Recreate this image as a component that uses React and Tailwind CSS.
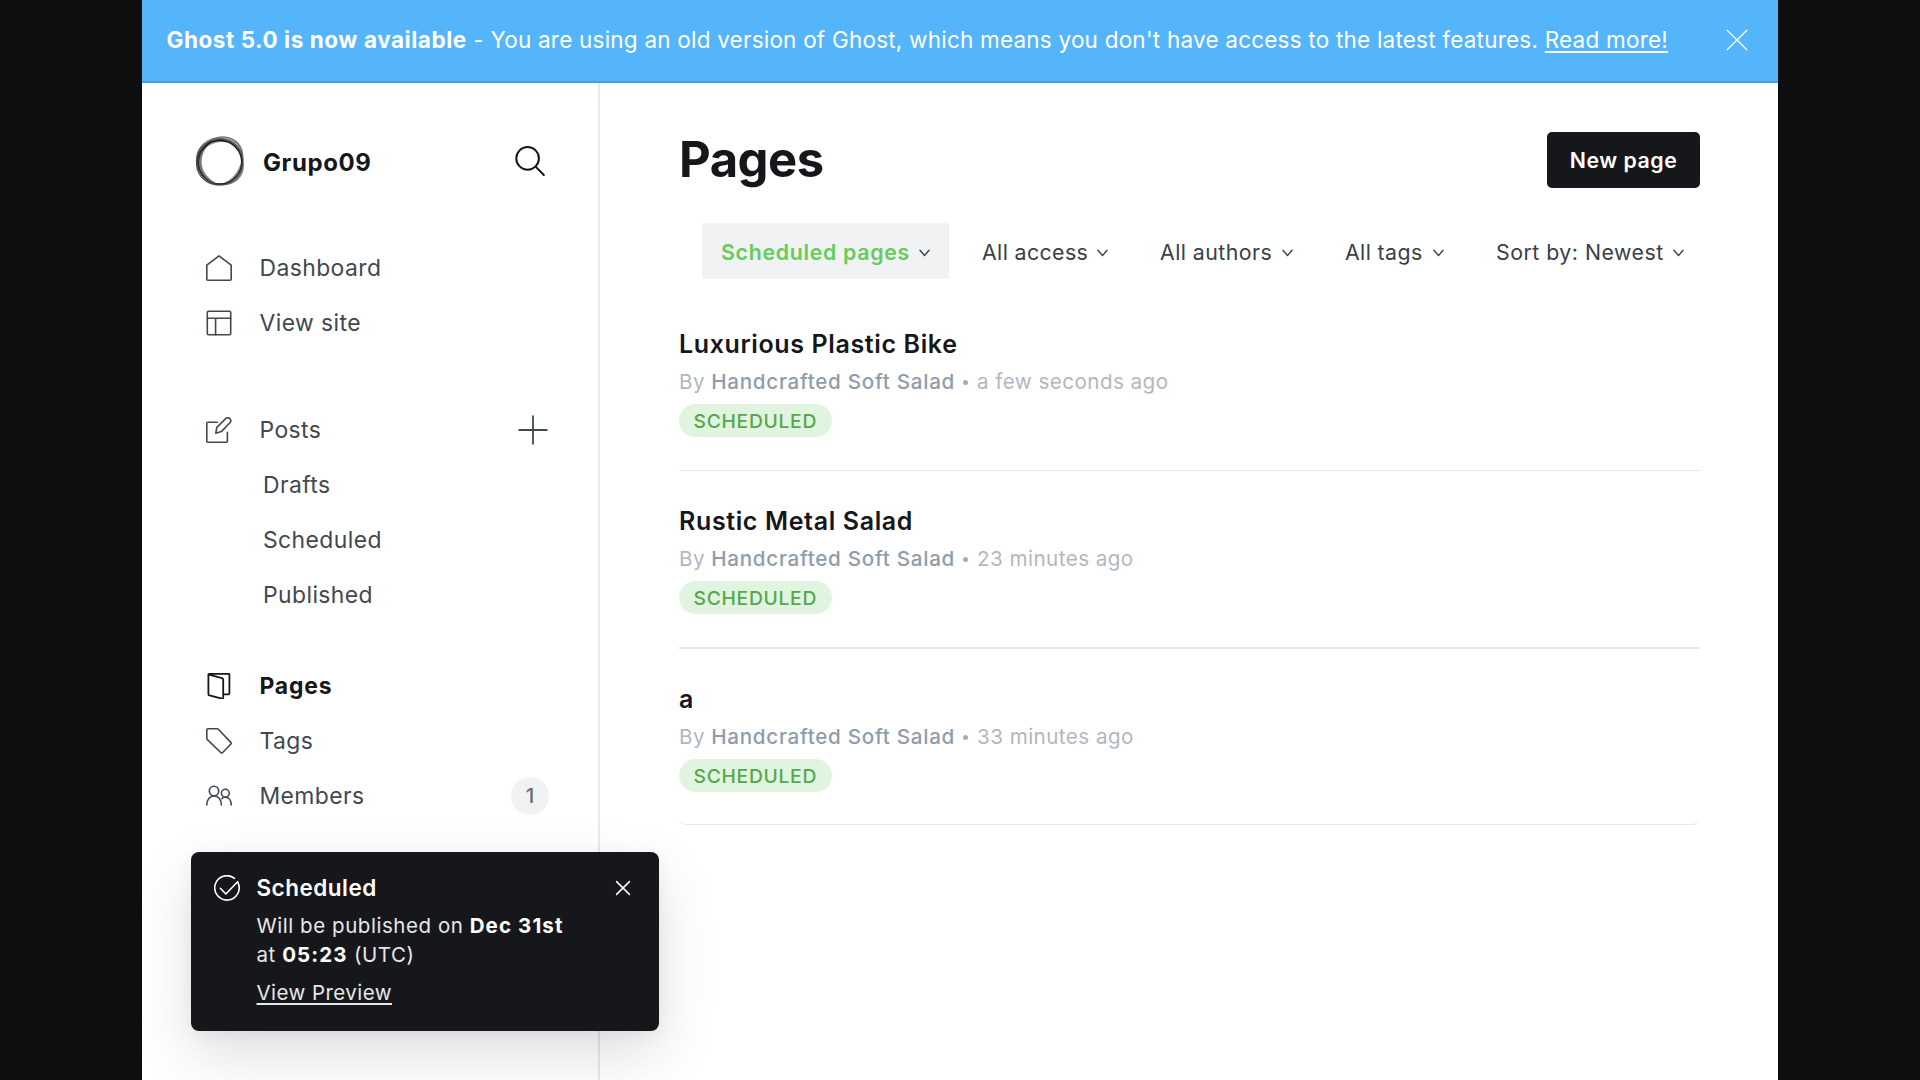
import React from 'react';

function Icon({ className = 'size-[26px]', width = 1.6, children }) {
  return (
    <svg
      viewBox="0 0 26 26"
      fill="none"
      stroke="currentColor"
      strokeWidth={width}
      strokeLinecap="round"
      strokeLinejoin="round"
      className={'shrink-0 ' + className}
    >
      {children}
    </svg>
  );
}

const HomeIcon = () => (
  <Icon>
    <path d="M13 .9 25.2 10.2V24.2a1 1 0 0 1-1 1H1.8a1 1 0 0 1-1-1V10.2Z" />
  </Icon>
);

const LayoutIcon = () => (
  <Icon>
    <rect x="1.3" y="1.3" width="23.4" height="23.4" rx="1.2" />
    <path d="M1.3 8.3h23.4M9.6 8.3v16.4" />
  </Icon>
);

const PostIcon = () => (
  <Icon>
    <path d="M21.4 15.2v9a1 1 0 0 1-1 1H1.8a1 1 0 0 1-1-1V6.2a1 1 0 0 1 1-1h9.6" />
    <path d="m15.4 14.6-5.6 1.6 1-5.8 8.9-8.8a2.8 2.8 0 0 1 4.2 0 2.8 2.8 0 0 1 0 4.2Z" />
  </Icon>
);

const PageIcon = () => (
  <Icon width={1.8}>
    <path d="M3 1.6 16 5.2a1.6 1.6 0 0 1 1.2 1.5v18.1a.9.9 0 0 1-1.2.9L3.4 22.3a1.2 1.2 0 0 1-1-1.2V1.8a1 1 0 0 1 1-1h19a1 1 0 0 1 1 1v18.4a1.2 1.2 0 0 1-1.2 1.2h-4.8" />
  </Icon>
);

const TagIcon = () => (
  <Icon>
    <path d="M1.8.8h9.3a2 2 0 0 1 1.3.5L25 14.6a1 1 0 0 1 0 1.4l-8.6 8.8a1 1 0 0 1-1.4 0L1.4 11.6a2 2 0 0 1-.6-1.4V1.8a1 1 0 0 1 1-1Z" />
  </Icon>
);

const MembersIcon = () => (
  <Icon>
    <circle cx="8" cy="8" r="4.7" />
    <path d="M.8 22c0-5.2 2.8-9 7.2-9s7.4 3.8 7.4 9" />
    <circle cx="19.3" cy="10.2" r="3.9" />
    <path d="M15.9 15.6c1-.9 2.2-1.3 3.6-1.3 3.5 0 5.7 3.2 5.7 7.7" />
  </Icon>
);

const Chevron = () => (
  <svg viewBox="0 0 11 8" fill="none" stroke="currentColor" strokeWidth="1.4" strokeLinecap="round" strokeLinejoin="round" className="ml-auto mt-[3px] h-[8px] w-[11px] shrink-0 text-[#394047]">
    <path d="M1 1.2 5.5 6.6 10 1.2" />
  </svg>
);

const Logo = () => (
  <svg viewBox="0 0 50 50" fill="none" className="size-[50px] shrink-0">
    <g fill="#222" fillRule="evenodd">
      <path opacity=".62" d="M.8 25C.5 12 9 4.500 21 3 13 7 7 15 6.500 26 7 36 13 43 21 46.500 9 44 1 36 .8 25Z" />
      <path opacity=".4" d="M17 4C25-1 37-.5 43 6c5 5 6 11 5 17C46 14 38 6 28 6 21 6 13 9 8 15 10 10 13 6 17 4Z" />
      <path opacity=".5" d="M47.500 20c3 9 2 18-4.500 24-6 5-14 6-20 4.500C35 47 45 36 47.500 20Z" />
    </g>
    <ellipse cx="25" cy="26.300" rx="21.800" ry="21.800" stroke="#1a1a1a" strokeWidth="1.500" />
    <ellipse cx="24.500" cy="26" rx="23.500" ry="22" transform="rotate(-40 24.500 26)" stroke="#2a2a2a" strokeWidth="1.200" opacity=".8" />
    <ellipse cx="25.500" cy="25" rx="24.600" ry="22" transform="rotate(-65 25.500 25)" stroke="#444" strokeWidth=".9" opacity=".7" />
    <ellipse cx="25" cy="25.500" rx="24.300" ry="21.800" transform="rotate(55 25 25.500)" stroke="#444" strokeWidth=".9" opacity=".7" />
  </svg>
);

function NavItem({ icon, label, active, children }) {
  return (
    <li
      className={
        active
          ? 'flex h-[55px] items-center pl-[64px] pr-[50px] text-[22.9px] font-bold tracking-[0.8px] text-[#15171a]'
          : 'flex h-[55px] items-center pl-[64px] pr-[50px] text-[22.9px] tracking-[0.42px] text-[#414850]'
      }
    >
      {icon}
      <span className="ml-[27.5px] flex-1 pt-[2px]">{label}</span>
      {children}
    </li>
  );
}

const SubItem = ({ label }) => (
  <li className="flex h-[55px] items-center pl-[121px] pt-[2px] text-[22.9px] tracking-[0.42px] text-[#414850]">{label}</li>
);

function Sidebar() {
  return (
    <aside className="flex w-[458px] shrink-0 flex-col border-r-2 border-[#e8e9eb] pt-[50px]">
      <div className="flex h-[56px] items-center pl-[53px] pr-[53px]">
        <Logo />
        <span className="ml-[18px] flex-1 pt-[3px] text-[24px] font-bold tracking-[0.6px] text-[#15171a]">Grupo09</span>
        <svg viewBox="0 0 30 30" fill="none" stroke="#15171a" strokeWidth="2" strokeLinecap="round" className="size-[30px]">
          <circle cx="12.600" cy="12.400" r="11.300" />
          <path d="m20.600 20.600 8.200 8.400" />
        </svg>
      </div>
      <ul className="mt-[51px]">
        <NavItem icon={<HomeIcon />} label="Dashboard" />
        <NavItem icon={<LayoutIcon />} label="View site" />
      </ul>
      <ul className="mt-[52px]">
        <NavItem icon={<PostIcon />} label="Posts">
          <svg viewBox="0 0 30 30" fill="none" stroke="currentColor" strokeWidth="1.8" strokeLinecap="round" className="size-[30px]">
            <path d="M15 1.200v27.600M1.200 15h27.600" />
          </svg>
        </NavItem>
        <SubItem label="Drafts" />
        <SubItem label="Scheduled" />
        <SubItem label="Published" />
      </ul>
      <ul className="mt-[36px]">
        <NavItem icon={<PageIcon />} label="Pages" active />
        <NavItem icon={<TagIcon />} label="Tags" />
        <NavItem icon={<MembersIcon />} label="Members">
          <span className="-mr-px flex size-[38px] items-center justify-center rounded-full bg-[#f1f2f4] pt-px text-[20.5px] font-medium tracking-normal text-[#626d79]">1</span>
        </NavItem>
      </ul>
    </aside>
  );
}

const pages = [
  { title: 'Luxurious Plastic Bike', time: 'a few seconds ago' },
  { title: 'Rustic Metal Salad', time: '23 minutes ago' },
  { title: 'a', time: '33 minutes ago' },
];

const rowStyles = [
  'h-[177px] border-b',
  'h-[178px] border-b-2',
  'h-[176px] border-b rounded-b-[8px]',
];

function PageRow({ page, style }) {
  return (
    <li className={'flex flex-col items-start border-[#e6e8ea] pt-[33px] ' + style}>
      <h3 className="text-[25px] font-semibold leading-[34px] tracking-[0.63px] text-[#15171a]">{page.title}</h3>
      <p className="mt-[7px] text-[20.6px] leading-[28px] tracking-[0.46px] text-[#afb8c2]">
        By <span className="font-medium tracking-[0.73px] text-[#8e9cac]">Handcrafted Soft Salad</span>
        <span className="ml-[8px] mr-[9px] inline-block size-[5px] rounded-full bg-[#a3adb8] align-[4px]" />
        {page.time}
      </p>
      <span className="mt-[8px] flex h-[33px] items-center rounded-full bg-[#e1f4df] pl-[14.5px] pr-[14.5px] pt-px text-[19.3px] font-medium tracking-[0.7px] text-[#55a84c]">
        SCHEDULED
      </span>
    </li>
  );
}

const filters = [
  { label: 'Scheduled pages', style: 'w-[247px] bg-[#f1f2f4] font-semibold tracking-[0.7px] text-[#64cd58]' },
  { label: 'All access', style: 'w-[164px] tracking-[0.4px] text-[#394047]' },
  { label: 'All authors', style: 'w-[171px] tracking-[0.45px] text-[#394047]' },
  { label: 'All tags', style: 'w-[137px] tracking-[0.4px] text-[#394047]' },
  { label: 'Sort by: Newest', style: 'w-[226px] tracking-[0.5px] text-[#394047]' },
];

function Main() {
  return (
    <main className="flex-1 pl-[79px] pt-[48px]">
      <header className="flex h-[57px] w-[1021px] items-center justify-between">
        <h1 className="text-[49px] font-bold leading-[56px] tracking-[-0.5px] text-[#15171a]">Pages</h1>
        <button className="flex h-[56px] w-[153px] items-center justify-center rounded-[5px] bg-[#15171a] pt-[2px] text-[21.3px] font-semibold tracking-[0.54px] text-white">
          New page
        </button>
      </header>
      <div className="mt-[35px] flex gap-[14px] pl-[22.5px]">
        {filters.map((f) => (
          <div key={f.label} className={'flex h-[56px] shrink-0 items-center rounded-[3px] pl-[19.5px] pr-[18.5px] ' + f.style}>
            <span className="pt-[3px] text-[21.3px]">{f.label}</span>
            <Chevron />
          </div>
        ))}
      </div>
      <ul className="mt-[15px] w-[1021px]">
        {pages.map((p, i) => (
          <PageRow key={p.title} page={p} style={rowStyles[i]} />
        ))}
      </ul>
    </main>
  );
}

function Toast() {
  return (
    <div className="absolute left-[191px] top-[852px] flex h-[179px] w-[468px] rounded-[8px] bg-[#15171a] pl-[23px] text-white shadow-[0_24px_60px_rgba(0,0,0,0.13),0_4px_16px_rgba(0,0,0,0.05)]">
      <Icon className="mt-[23px] size-[26px]">
        <path d="M23.900 7.500A12.200 12.200 0 1 1 20.500 3.300" />
        <path d="m6.300 13.300 5.600 5.700L23.600 6.700" />
      </Icon>
      <div className="ml-[16.5px] flex-1">
        <h4 className="mt-[20px] text-[22.5px] font-semibold leading-[32px] tracking-[0.48px]">Scheduled</h4>
        <p className="mt-[7px] text-[20.5px] leading-[29px] tracking-[0.55px] text-white/90">
          Will be published on <b className="font-bold tracking-[1.1px] text-white">Dec 31st</b>
          <br />
          at <b className="font-bold tracking-[1.1px] text-white">05:23</b> (UTC)
        </p>
        <a className="mt-[9px] block text-[20.5px] leading-[29px] tracking-[0.45px] text-white/90 underline decoration-[1.5px] underline-offset-[3px]">View Preview</a>
      </div>
      <svg viewBox="0 0 16 16" fill="none" stroke="#fff" strokeWidth="1.5" strokeLinecap="round" className="mr-[28px] mt-[28px] size-[16px]">
        <path d="m1.600 1.600 12.800 12.800M14.400 1.600 1.600 14.400" />
      </svg>
    </div>
  );
}

export default function App() {
  return (
    <div className="h-[1080px] w-[1920px] overflow-hidden bg-[#0e0e0e] pl-[142px] font-['Inter','Open_Sans',sans-serif]">
      <div className="flex h-[1080px] w-[1636px] flex-col bg-white">
        <div className="flex h-[83px] shrink-0 items-center justify-between whitespace-nowrap border-b-2 border-[#459fe5] bg-[#55b5fb] pl-[24.5px] pr-[30px] text-[22.5px] tracking-[0.215px] text-white">
          <p className="pb-px">
            <b className="font-bold tracking-[0.55px]">Ghost 5.0 is now available</b> - You are using an old version of Ghost, which means you don't have access to the latest features.{' '}
            <a className="underline decoration-[1.5px] underline-offset-[3px]">Read more!</a>
          </p>
          <svg viewBox="0 0 22 22" fill="none" stroke="#fff" strokeWidth="1.3" strokeLinecap="round" className="mb-[2px] size-[22px]">
            <path d="m1.200 1.200 19.600 19.600M20.800 1.200 1.200 20.800" />
          </svg>
        </div>
        <div className="flex min-h-0 flex-1 whitespace-nowrap">
          <Sidebar />
          <Main />
        </div>
      </div>
      <Toast />
    </div>
  );
}
